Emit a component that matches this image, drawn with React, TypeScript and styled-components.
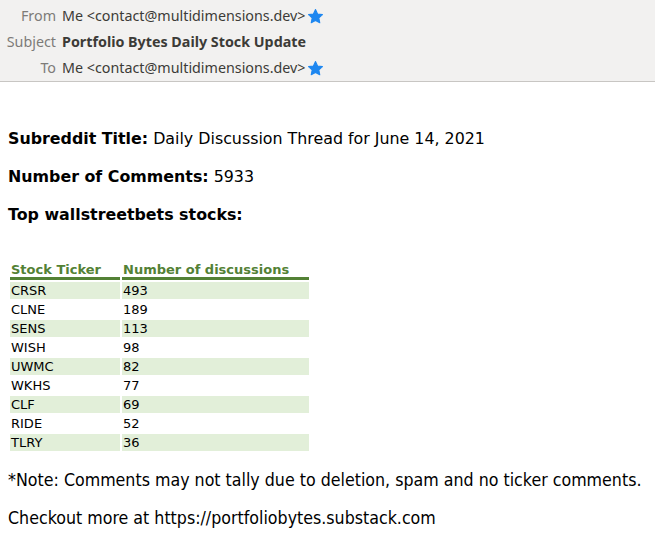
import React from "react";
import styled, { createGlobalStyle } from "styled-components";

const Global = createGlobalStyle`
  html, body { margin: 0; padding: 0; background: #ffffff; }
  body { font-family: "DejaVu Sans", Verdana, sans-serif; }
`;

const Header = styled.div`
  background: #f2f1f0;
  border-bottom: 1px solid #c8c6c3;
  padding: 3px 0 0 0;
  display: grid;
  grid-template-columns: 56px auto;
  column-gap: 6px;
  align-items: center;
  justify-content: start;
`;

const Label = styled.div`
  font-family: "Noto Sans", "Open Sans", sans-serif;
  font-size: 14.3px;
  color: #7d7b78;
  text-align: right;
  height: 26px;
  line-height: 26px;
`;

const Value = styled.div<{ $bold?: boolean }>`
  font-family: "Noto Sans", "Open Sans", sans-serif;
  font-size: 14.3px;
  color: #3c3b37;
  font-weight: ${(p) => (p.$bold ? 700 : 400)};
  height: 26px;
  line-height: 26px;
  display: flex;
  align-items: center;
  gap: 1px;
`;

const Star = styled.svg`
  width: 17px;
  height: 17px;
  flex: none;
`;

const Body = styled.div`
  padding: 30px 8px 8px 8px;
  color: #000;
  font-family: "DejaVu Sans", Verdana, sans-serif;
`;

const Para = styled.p`
  margin: 16px 0;
  font-size: 15.85px;
  line-height: 22px;
`;

const Table = styled.table`
  border-spacing: 2px;
  table-layout: fixed;
  width: 303px;
  margin: 34px 0 0 0;
  font-family: "DejaVu Sans", Verdana, sans-serif;
  font-size: 13px;
`;

const Th = styled.th<{ $w: number }>`
  box-sizing: border-box;
  width: ${(p) => p.$w}px;
  text-align: left;
  color: #538135;
  font-weight: 700;
  padding: 0 1px;
  border-bottom: 3px solid #538135;
  line-height: 15px;
  white-space: nowrap;
`;

const Td = styled.td<{ $shade: boolean }>`
  background: ${(p) => (p.$shade ? "#e2efd9" : "transparent")};
  padding: 0 1px;
  line-height: 17px;
  color: #000;
`;

const Foot = styled.p`
  margin: 16px 0;
  font-size: 17.65px;
  line-height: 22px;
  font-family: "DejaVu Sans Condensed", "DejaVu Sans", sans-serif;
  font-stretch: condensed;
`;

const StarIcon = () => (
  <Star viewBox="0 0 24 24">
    <path
      d="M12 2.2l2.95 6.3 6.85.85-5.05 4.75 1.3 6.8L12 17.55 5.95 20.9l1.3-6.8L2.2 9.35l6.85-.85z"
      fill="#1e87f0"
      stroke="#1e87f0"
      strokeWidth="1.5"
      strokeLinejoin="round"
    />
  </Star>
);

const rows: [string, number][] = [
  ["CRSR", 493],
  ["CLNE", 189],
  ["SENS", 113],
  ["WISH", 98],
  ["UWMC", 82],
  ["WKHS", 77],
  ["CLF", 69],
  ["RIDE", 52],
  ["TLRY", 36],
];

export default function App() {
  return (
    <>
      <Global />
      <Header>
        <Label>From</Label>
        <Value>
          Me &lt;contact@multidimensions.dev&gt;
          <StarIcon />
        </Value>
        <Label>Subject</Label>
        <Value $bold>Portfolio Bytes Daily Stock Update</Value>
        <Label>To</Label>
        <Value>
          Me &lt;contact@multidimensions.dev&gt;
          <StarIcon />
        </Value>
      </Header>
      <Body>
        <Para>
          <b>Subreddit Title:</b> Daily Discussion Thread for June 14, 2021
        </Para>
        <Para>
          <b>Number of Comments:</b> 5933
        </Para>
        <Para>
          <b>Top wallstreetbets stocks:</b>
        </Para>
        <Table>
          <thead>
            <tr>
              <Th $w={110}>Stock Ticker</Th>
              <Th $w={187}>Number of discussions</Th>
            </tr>
          </thead>
          <tbody>
            {rows.map(([t, n], i) => (
              <tr key={t}>
                <Td $shade={i % 2 === 0}>{t}</Td>
                <Td $shade={i % 2 === 0}>{n}</Td>
              </tr>
            ))}
          </tbody>
        </Table>
        <Foot>*Note: Comments may not tally due to deletion, spam and no ticker comments.</Foot>
        <Foot>Checkout more at https://portfoliobytes.substack.com</Foot>
      </Body>
    </>
  );
}
